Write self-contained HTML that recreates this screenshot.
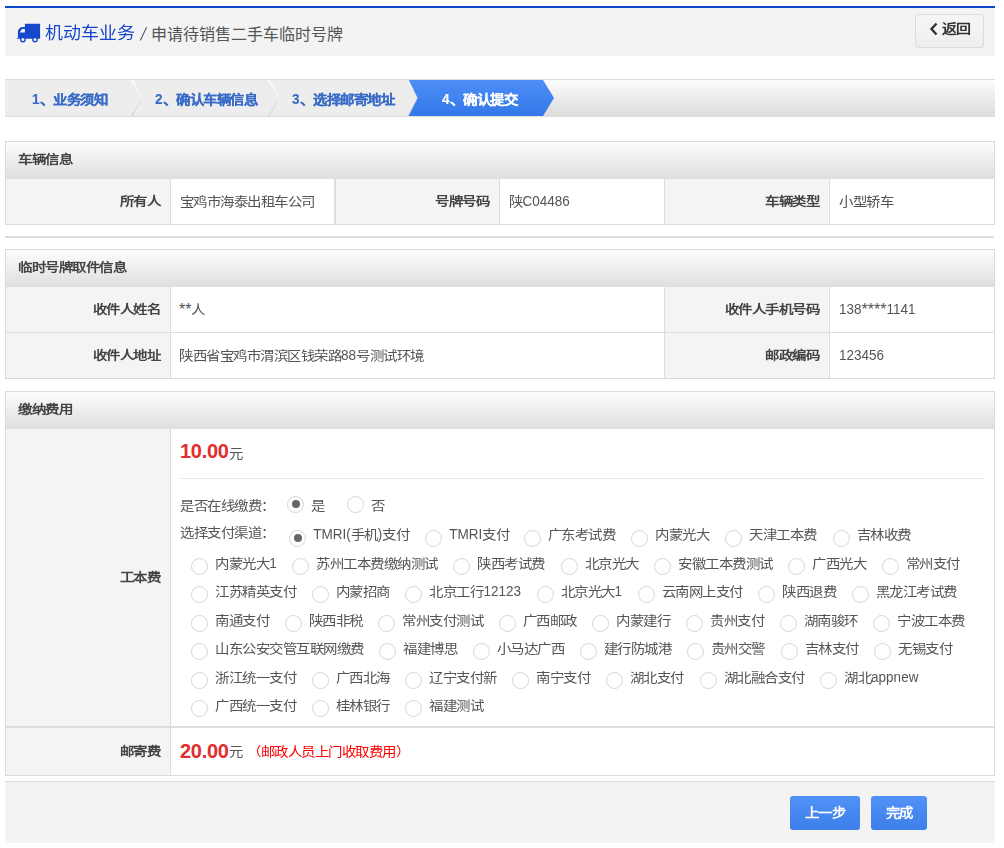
<!DOCTYPE html>
<html lang="zh-CN">
<head>
<meta charset="utf-8">
<style>
*{box-sizing:border-box;margin:0;padding:0}
html,body{width:1004px;height:848px;overflow:hidden;background:#fff}
body{position:relative;font-family:"Liberation Sans",sans-serif;font-size:13.5px;color:#555}
div,span.a{position:absolute}
.t{white-space:nowrap;line-height:20px;font-size:13.5px}
.b{font-weight:bold;--cs:0.9}
.lab{--cs:0.9;font-weight:bold;color:#444;text-align:right;white-space:nowrap;line-height:20px}
.hline{background:#dddddd;height:1px}
.vline{background:#dddddd;width:1px}
.ph{background:linear-gradient(#fdfdfd,#dedede)}
.gray{background:#f4f4f4}
.radio{width:17px;height:17px;border:1px solid #d6d6d6;border-radius:50%;background:#fff}
.radio.on::after{content:"";position:absolute;left:3.5px;top:3.5px;width:8px;height:8px;border-radius:50%;background:#666}
.st{top:90px;font-size:13.5px;font-weight:bold;-webkit-text-stroke:0.15px currentColor;color:#3a6cc6;line-height:20px;white-space:nowrap}
.btn{top:796px;height:34px;border-radius:3px;background:linear-gradient(#5092f7,#3d7ee9);color:#fff;font-weight:bold;font-size:13.5px;line-height:34px;text-align:center}
i{font-style:normal;display:inline-block;width:var(--adv,13.5px);transform:scale(var(--cx,1.07),var(--cs,0.95))}
.l{display:inline-block;transform-origin:50% 14.7px;transform:scaleY(var(--ls,1.13))}
.k{font-size:16px;line-height:1px;vertical-align:-1.2px}
.red{--ls:1;color:#e22d2d;font-weight:bold;font-size:20px;line-height:24px;letter-spacing:-0.3px;white-space:nowrap}
</style>
</head>
<body>
<div style="left:5px;top:6px;width:990px;height:2px;background:#0c44c8"></div>
<div style="left:5px;top:8px;width:990px;height:48px;background:#f3f3f3"></div>
<svg style="position:absolute;left:14px;top:20px" width="30" height="26" viewBox="0 0 30 26">
  <path fill="#1648cc" fill-rule="evenodd" d="M10.9 3.8 H26.1 V18.7 H2.9 V18.1 H3.9 V11.6 Q3.9 10.2 4.9 9.1 L6.3 7.7 Q7 7 8.2 7 H10.9 Z M5.6 12.6 L8.1 8.9 H10.9 V12.6 Z"/>
  <circle cx="8.9" cy="19.6" r="2.9" fill="#1648cc"/><circle cx="8.9" cy="19.6" r="1.5" fill="#f6f6f6"/>
  <circle cx="21" cy="19.6" r="2.9" fill="#1648cc"/><circle cx="21" cy="19.6" r="1.5" fill="#f6f6f6"/>
</svg>
<div class="t" style="left:45px;top:21px;font-size:18px;line-height:24px;color:#1446cc;--cs:0.95;--adv:18px;--cx:1"><i>机</i><i>动</i><i>车</i><i>业</i><i>务</i></div>
<svg style="position:absolute;left:138px;top:25px" width="10" height="18" viewBox="0 0 10 18"><line x1="2.3" y1="15.6" x2="8.6" y2="2.2" stroke="#5a5a5a" stroke-width="1.1"/></svg>
<div class="t" style="left:151px;top:22.5px;font-size:16px;line-height:24px;color:#555;--cs:1;--adv:16px;--cx:1"><i>申</i><i>请</i><i>待</i><i>销</i><i>售</i><i>二</i><i>手</i><i>车</i><i>临</i><i>时</i><i>号</i><i>牌</i></div>
<div style="left:915px;top:14px;width:69px;height:34px;border:1px solid #dcdcdc;border-radius:3px;background:linear-gradient(#f6f6f6,#eeeeee)"></div>
<svg style="position:absolute;left:929px;top:22px" width="10" height="14" viewBox="0 0 10 14"><path d="M7.5 1.5 L2.5 7 L7.5 12.5" fill="none" stroke="#333" stroke-width="2.4"/></svg>
<div class="t b" style="left:942px;top:18px;color:#333;font-size:14px;--adv:13.6px"><i>返</i><i>回</i></div>
<div style="left:5px;top:79px;width:990px;height:38px;border-top:1px solid #d9d9d9;border-bottom:1px solid #dcdcdc;background:linear-gradient(#fcfcfc,#dcdcdc)"></div>
<svg style="position:absolute;left:5px;top:80px" width="990" height="36" viewBox="0 0 990 36">
  <defs>
   <linearGradient id="bg4" x1="0" y1="0" x2="0" y2="1"><stop offset="0" stop-color="#4d8ef7"/><stop offset="1" stop-color="#3478e8"/></linearGradient>
   <linearGradient id="hi" x1="0" y1="0" x2="0" y2="18" gradientUnits="userSpaceOnUse"><stop offset="0" stop-color="#fff" stop-opacity="1"/><stop offset="1" stop-color="#fff" stop-opacity="0.1"/></linearGradient>
   <linearGradient id="sh" x1="0" y1="18" x2="0" y2="36" gradientUnits="userSpaceOnUse"><stop offset="0" stop-color="#d6d6d6" stop-opacity="0.2"/><stop offset="1" stop-color="#d6d6d6" stop-opacity="1"/></linearGradient>
   <filter id="bl" x="-50%" y="-10%" width="200%" height="120%"><feGaussianBlur stdDeviation="0.45"/></filter>
  </defs>
  <rect x="0" y="0" width="413" height="36" fill="#ededed"/>
  <polygon points="403,0 538,0 549,18 538,36 403,36 412.5,18" fill="url(#bg4)"/>
  <g filter="url(#bl)">
  <path d="M126.5,0 Q133,9 136,17" fill="none" stroke="url(#hi)" stroke-width="1.6"/>
  <path d="M136,19 Q133,27 126.5,36" fill="none" stroke="url(#sh)" stroke-width="1.4"/>
  <path d="M263.5,0 Q270,9 273,17" fill="none" stroke="url(#hi)" stroke-width="1.6"/>
  <path d="M273,19 Q270,27 263.5,36" fill="none" stroke="url(#sh)" stroke-width="1.4"/>
  <path d="M403,0 L412.5,18" fill="none" stroke="url(#hi)" stroke-width="1.2"/>
  <path d="M412.5,18 L403,36" fill="none" stroke="url(#sh)" stroke-width="1.2"/>
  </g>
</svg>
<div class="st" style="left:32px"><span class="l">1</span><i>、</i><i>业</i><i>务</i><i>须</i><i>知</i></div>
<div class="st" style="left:155px"><span class="l">2</span><i>、</i><i>确</i><i>认</i><i>车</i><i>辆</i><i>信</i><i>息</i></div>
<div class="st" style="left:292px"><span class="l">3</span><i>、</i><i>选</i><i>择</i><i>邮</i><i>寄</i><i>地</i><i>址</i></div>
<div class="st" style="left:442px;color:#fff"><span class="l">4</span><i>、</i><i>确</i><i>认</i><i>提</i><i>交</i></div>
<div style="left:5px;top:141px;width:990px;height:84px;border:1px solid #dadada;background:#fff"></div>
<div class="ph" style="left:6px;top:142px;width:988px;height:37px"></div>
<div class="t b" style="left:18px;top:149.5px;color:#444"><i>车</i><i>辆</i><i>信</i><i>息</i></div>
<div class="gray" style="left:6px;top:179px;width:164px;height:45px"></div>
<div class="lab" style="left:6px;top:192.1px;width:154.4px"><i>所</i><i>有</i><i>人</i></div>
<div class="t" style="left:179.5px;top:192.1px;"><i>宝</i><i>鸡</i><i>市</i><i>海</i><i>泰</i><i>出</i><i>租</i><i>车</i><i>公</i><i>司</i></div>
<div class="gray" style="left:336px;top:179px;width:163px;height:45px"></div>
<div class="lab" style="left:336px;top:192.1px;width:153.4px"><i>号</i><i>牌</i><i>号</i><i>码</i></div>
<div class="t" style="left:509px;top:192.1px;"><i>陕</i><span class="l">C04486</span></div>
<div class="gray" style="left:665px;top:179px;width:164px;height:45px"></div>
<div class="lab" style="left:665px;top:192.1px;width:154.4px"><i>车</i><i>辆</i><i>类</i><i>型</i></div>
<div class="t" style="left:839px;top:192.1px;"><i>小</i><i>型</i><i>轿</i><i>车</i></div>
<div class="vline" style="left:170px;top:179px;height:45px;width:1px"></div>
<div class="vline" style="left:334px;top:179px;height:45px;width:2px"></div>
<div class="vline" style="left:499px;top:179px;height:45px;width:1px"></div>
<div class="vline" style="left:664px;top:179px;height:45px;width:1px"></div>
<div class="vline" style="left:829px;top:179px;height:45px;width:1px"></div>
<div style="left:5px;top:236px;width:989px;height:2px;background:#dddddd"></div>
<div style="left:5px;top:249px;width:990px;height:130px;border:1px solid #dadada;background:#fff"></div>
<div class="ph" style="left:6px;top:250px;width:988px;height:37px"></div>
<div class="t b" style="left:18px;top:257.5px;color:#444"><i>临</i><i>时</i><i>号</i><i>牌</i><i>取</i><i>件</i><i>信</i><i>息</i></div>
<div class="gray" style="left:6px;top:287px;width:164px;height:45px"></div>
<div class="lab" style="left:6px;top:300.1px;width:154.4px"><i>收</i><i>件</i><i>人</i><i>姓</i><i>名</i></div>
<div class="t" style="left:179px;top:300.1px;"><span class="k">**</span><i>人</i></div>
<div class="gray" style="left:665px;top:287px;width:164px;height:45px"></div>
<div class="lab" style="left:665px;top:300.1px;width:154.4px"><i>收</i><i>件</i><i>人</i><i>手</i><i>机</i><i>号</i><i>码</i></div>
<div class="t" style="left:839px;top:300.1px;"><span class="l">138</span><span class="k">****</span><span class="l">1141</span></div>
<div class="gray" style="left:6px;top:333px;width:164px;height:45px"></div>
<div class="lab" style="left:6px;top:346.1px;width:154.4px"><i>收</i><i>件</i><i>人</i><i>地</i><i>址</i></div>
<div class="t" style="left:179px;top:346.1px;"><i>陕</i><i>西</i><i>省</i><i>宝</i><i>鸡</i><i>市</i><i>渭</i><i>滨</i><i>区</i><i>钱</i><i>荣</i><i>路</i><span class="l">88</span><i>号</i><i>测</i><i>试</i><i>环</i><i>境</i></div>
<div class="gray" style="left:665px;top:333px;width:164px;height:45px"></div>
<div class="lab" style="left:665px;top:346.1px;width:154.4px"><i>邮</i><i>政</i><i>编</i><i>码</i></div>
<div class="t" style="left:839px;top:346.1px;"><span class="l">123456</span></div>
<div class="hline" style="left:6px;top:332px;width:988px"></div>
<div class="vline" style="left:170px;top:287px;height:91px"></div>
<div class="vline" style="left:664px;top:287px;height:91px"></div>
<div class="vline" style="left:829px;top:287px;height:91px"></div>
<div style="left:5px;top:391px;width:990px;height:385px;border:1px solid #dadada;background:#fff"></div>
<div class="ph" style="left:6px;top:392px;width:988px;height:37px"></div>
<div class="t b" style="left:18px;top:399.5px;color:#444"><i>缴</i><i>纳</i><i>费</i><i>用</i></div>
<div class="gray" style="left:6px;top:429px;width:164px;height:297px"></div>
<div class="lab" style="left:6px;top:568.1px;width:154.4px"><i>工</i><i>本</i><i>费</i></div>
<div class="gray" style="left:6px;top:728px;width:164px;height:47px"></div>
<div class="lab" style="left:6px;top:742.1px;width:154.4px"><i>邮</i><i>寄</i><i>费</i></div>
<div style="left:6px;top:726px;width:988px;height:2px;background:#dddddd"></div>
<div class="vline" style="left:170px;top:429px;height:346px"></div>
<div class="red" style="left:180px;top:439px"><span class="l">10.00</span></div>
<div class="t" style="left:229px;top:443.5px"><i>元</i></div>
<div style="left:180px;top:478px;width:805px;height:1px;background:#e6e6e6"></div>
<div class="red" style="left:180px;top:738.5px"><span class="l">20.00</span></div>
<div class="t" style="left:229px;top:742px"><i>元</i></div>
<div class="t" style="left:247px;top:742px;color:#f00"><i>（</i><i>邮</i><i>政</i><i>人</i><i>员</i><i>上</i><i>门</i><i>收</i><i>取</i><i>费</i><i>用</i><i>）</i></div>
<div class="t" style="left:180px;top:496px"><i>是</i><i>否</i><i>在</i><i>线</i><i>缴</i><i>费</i><i>：</i></div>
<div class="t" style="left:180px;top:523px"><i>选</i><i>择</i><i>支</i><i>付</i><i>渠</i><i>道</i><i>：</i></div>
<div class="radio on" style="left:287.0px;top:495.9px"></div>
<div class="t" style="left:311px;top:496px"><i>是</i></div>
<div class="radio" style="left:347.0px;top:495.9px"></div>
<div class="t" style="left:371px;top:496px"><i>否</i></div>
<div class="radio on" style="left:289.2px;top:529.7px"></div>
<div class="t" style="left:313.2px;top:525.3px"><span class="l">TMRI(</span><i>手</i><i>机</i><span class="l">)</span><i>支</i><i>付</i></div>
<div class="radio" style="left:425.2px;top:529.7px"></div>
<div class="t" style="left:449.2px;top:525.3px"><span class="l">TMRI</span><i>支</i><i>付</i></div>
<div class="radio" style="left:523.8px;top:529.7px"></div>
<div class="t" style="left:547.8px;top:525.3px"><i>广</i><i>东</i><i>考</i><i>试</i><i>费</i></div>
<div class="radio" style="left:631.3px;top:529.7px"></div>
<div class="t" style="left:655.3px;top:525.3px"><i>内</i><i>蒙</i><i>光</i><i>大</i></div>
<div class="radio" style="left:725.3px;top:529.7px"></div>
<div class="t" style="left:749.3px;top:525.3px"><i>天</i><i>津</i><i>工</i><i>本</i><i>费</i></div>
<div class="radio" style="left:832.8px;top:529.7px"></div>
<div class="t" style="left:856.8px;top:525.3px"><i>吉</i><i>林</i><i>收</i><i>费</i></div>
<div class="radio" style="left:191.2px;top:558.0px"></div>
<div class="t" style="left:215.2px;top:554.2px"><i>内</i><i>蒙</i><i>光</i><i>大</i><span class="l">1</span></div>
<div class="radio" style="left:292.3px;top:558.0px"></div>
<div class="t" style="left:316.3px;top:554.2px"><i>苏</i><i>州</i><i>工</i><i>本</i><i>费</i><i>缴</i><i>纳</i><i>测</i><i>试</i></div>
<div class="radio" style="left:453.4px;top:558.0px"></div>
<div class="t" style="left:477.4px;top:554.2px"><i>陕</i><i>西</i><i>考</i><i>试</i><i>费</i></div>
<div class="radio" style="left:560.5px;top:558.0px"></div>
<div class="t" style="left:584.5px;top:554.2px"><i>北</i><i>京</i><i>光</i><i>大</i></div>
<div class="radio" style="left:654.1px;top:558.0px"></div>
<div class="t" style="left:678.1px;top:554.2px"><i>安</i><i>徽</i><i>工</i><i>本</i><i>费</i><i>测</i><i>试</i></div>
<div class="radio" style="left:788.2px;top:558.0px"></div>
<div class="t" style="left:812.2px;top:554.2px"><i>广</i><i>西</i><i>光</i><i>大</i></div>
<div class="radio" style="left:881.8px;top:558.0px"></div>
<div class="t" style="left:905.8px;top:554.2px"><i>常</i><i>州</i><i>支</i><i>付</i></div>
<div class="radio" style="left:191.2px;top:586.1px"></div>
<div class="t" style="left:215.2px;top:582.1px"><i>江</i><i>苏</i><i>精</i><i>英</i><i>支</i><i>付</i></div>
<div class="radio" style="left:311.8px;top:586.1px"></div>
<div class="t" style="left:335.8px;top:582.1px"><i>内</i><i>蒙</i><i>招</i><i>商</i></div>
<div class="radio" style="left:405.4px;top:586.1px"></div>
<div class="t" style="left:429.4px;top:582.1px"><i>北</i><i>京</i><i>工</i><i>行</i><span class="l">12123</span></div>
<div class="radio" style="left:536.5px;top:586.1px"></div>
<div class="t" style="left:560.5px;top:582.1px"><i>北</i><i>京</i><i>光</i><i>大</i><span class="l">1</span></div>
<div class="radio" style="left:637.6px;top:586.1px"></div>
<div class="t" style="left:661.6px;top:582.1px"><i>云</i><i>南</i><i>网</i><i>上</i><i>支</i><i>付</i></div>
<div class="radio" style="left:758.2px;top:586.1px"></div>
<div class="t" style="left:782.2px;top:582.1px"><i>陕</i><i>西</i><i>退</i><i>费</i></div>
<div class="radio" style="left:851.8px;top:586.1px"></div>
<div class="t" style="left:875.8px;top:582.1px"><i>黑</i><i>龙</i><i>江</i><i>考</i><i>试</i><i>费</i></div>
<div class="radio" style="left:191.0px;top:614.7px"></div>
<div class="t" style="left:215.0px;top:610.6px"><i>南</i><i>通</i><i>支</i><i>付</i></div>
<div class="radio" style="left:284.6px;top:614.7px"></div>
<div class="t" style="left:308.6px;top:610.6px"><i>陕</i><i>西</i><i>非</i><i>税</i></div>
<div class="radio" style="left:378.2px;top:614.7px"></div>
<div class="t" style="left:402.2px;top:610.6px"><i>常</i><i>州</i><i>支</i><i>付</i><i>测</i><i>试</i></div>
<div class="radio" style="left:498.8px;top:614.7px"></div>
<div class="t" style="left:522.8px;top:610.6px"><i>广</i><i>西</i><i>邮</i><i>政</i></div>
<div class="radio" style="left:592.4px;top:614.7px"></div>
<div class="t" style="left:616.4px;top:610.6px"><i>内</i><i>蒙</i><i>建</i><i>行</i></div>
<div class="radio" style="left:686.0px;top:614.7px"></div>
<div class="t" style="left:710.0px;top:610.6px"><i>贵</i><i>州</i><i>支</i><i>付</i></div>
<div class="radio" style="left:779.6px;top:614.7px"></div>
<div class="t" style="left:803.6px;top:610.6px"><i>湖</i><i>南</i><i>骏</i><i>环</i></div>
<div class="radio" style="left:873.2px;top:614.7px"></div>
<div class="t" style="left:897.2px;top:610.6px"><i>宁</i><i>波</i><i>工</i><i>本</i><i>费</i></div>
<div class="radio" style="left:191.0px;top:642.7px"></div>
<div class="t" style="left:215.0px;top:638.5px"><i>山</i><i>东</i><i>公</i><i>安</i><i>交</i><i>管</i><i>互</i><i>联</i><i>网</i><i>缴</i><i>费</i></div>
<div class="radio" style="left:379.1px;top:642.7px"></div>
<div class="t" style="left:403.1px;top:638.5px"><i>福</i><i>建</i><i>博</i><i>思</i></div>
<div class="radio" style="left:472.7px;top:642.7px"></div>
<div class="t" style="left:496.7px;top:638.5px"><i>小</i><i>马</i><i>达</i><i>广</i><i>西</i></div>
<div class="radio" style="left:579.8px;top:642.7px"></div>
<div class="t" style="left:603.8px;top:638.5px"><i>建</i><i>行</i><i>防</i><i>城</i><i>港</i></div>
<div class="radio" style="left:686.9px;top:642.7px"></div>
<div class="t" style="left:710.9px;top:638.5px"><i>贵</i><i>州</i><i>交</i><i>警</i></div>
<div class="radio" style="left:780.5px;top:642.7px"></div>
<div class="t" style="left:804.5px;top:638.5px"><i>吉</i><i>林</i><i>支</i><i>付</i></div>
<div class="radio" style="left:874.1px;top:642.7px"></div>
<div class="t" style="left:898.1px;top:638.5px"><i>无</i><i>锡</i><i>支</i><i>付</i></div>
<div class="radio" style="left:191.0px;top:671.5px"></div>
<div class="t" style="left:215.0px;top:667.7px"><i>浙</i><i>江</i><i>统</i><i>一</i><i>支</i><i>付</i></div>
<div class="radio" style="left:311.6px;top:671.5px"></div>
<div class="t" style="left:335.6px;top:667.7px"><i>广</i><i>西</i><i>北</i><i>海</i></div>
<div class="radio" style="left:405.2px;top:671.5px"></div>
<div class="t" style="left:429.2px;top:667.7px"><i>辽</i><i>宁</i><i>支</i><i>付</i><i>新</i></div>
<div class="radio" style="left:512.3px;top:671.5px"></div>
<div class="t" style="left:536.3px;top:667.7px"><i>南</i><i>宁</i><i>支</i><i>付</i></div>
<div class="radio" style="left:605.9px;top:671.5px"></div>
<div class="t" style="left:629.9px;top:667.7px"><i>湖</i><i>北</i><i>支</i><i>付</i></div>
<div class="radio" style="left:699.5px;top:671.5px"></div>
<div class="t" style="left:723.5px;top:667.7px"><i>湖</i><i>北</i><i>融</i><i>合</i><i>支</i><i>付</i></div>
<div class="radio" style="left:820.1px;top:671.5px"></div>
<div class="t" style="left:844.1px;top:667.7px"><i>湖</i><i>北</i><span class="l">appnew</span></div>
<div class="radio" style="left:191.0px;top:699.8px"></div>
<div class="t" style="left:215.0px;top:695.5px"><i>广</i><i>西</i><i>统</i><i>一</i><i>支</i><i>付</i></div>
<div class="radio" style="left:311.6px;top:699.8px"></div>
<div class="t" style="left:335.6px;top:695.5px"><i>桂</i><i>林</i><i>银</i><i>行</i></div>
<div class="radio" style="left:405.2px;top:699.8px"></div>
<div class="t" style="left:429.2px;top:695.5px"><i>福</i><i>建</i><i>测</i><i>试</i></div>
<div style="left:5px;top:781px;width:990px;height:62px;background:#f3f3f3;border-top:1px solid #dddddd"></div>
<div class="btn" style="left:790px;width:70px"><i>上</i><i>一</i><i>步</i></div>
<div class="btn" style="left:871px;width:56px"><i>完</i><i>成</i></div>
</body>
</html>
